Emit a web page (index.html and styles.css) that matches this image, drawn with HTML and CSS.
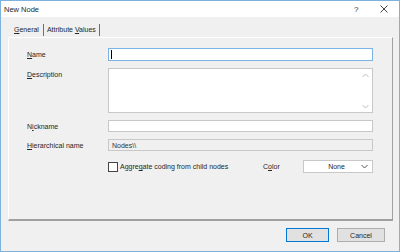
FILE: index.html
```html
<!DOCTYPE html>
<html lang="en">
<head>
  <meta charset="UTF-8">
  <title>New Node</title>
  <link rel="stylesheet" href="styles.css">
</head>
<body>
  <div class="window">
    <div class="titlebar">
      <span class="title">New Node</span>
      <span class="tb-help">?</span>
      <span class="tb-close">
        <svg width="8" height="8" viewBox="0 0 8 8"><path d="M0.5 0.5L7.5 7.5M7.5 0.5L0.5 7.5" stroke="#444" stroke-width="1"/></svg>
      </span>
    </div>

    <div class="tabs">
      <div class="tab active"><u>G</u>eneral</div>
      <div class="tab">Attribute <u>V</u>alues</div>
    </div>

    <div class="panel">
      <div class="form">
        <label class="lbl"><u>N</u>ame</label>
        <div class="box focused"><span class="caret"></span></div>

        <label class="lbl lbl-top"><u>D</u>escription</label>
        <div class="box memo">
          <div class="vscroll">
            <svg width="7" height="5" viewBox="0 0 7 5"><path d="M0.5 4L3.5 1L6.5 4" fill="none" stroke="#bdbdbd"/></svg>
            <svg width="7" height="5" viewBox="0 0 7 5"><path d="M0.5 1L3.5 4L6.5 1" fill="none" stroke="#bdbdbd"/></svg>
          </div>
        </div>

        <label class="lbl">N<u>i</u>ckname</label>
        <div class="box"></div>

        <label class="lbl"><u>H</u>ierarchical name</label>
        <div class="box disabled">Nodes\\</div>

        <span></span>
        <div class="options">
          <label class="check"><span class="checkbox"></span><span>Aggre<u>g</u>ate coding from child nodes</span></label>
          <span class="color-lbl">C<u>o</u>lor</span>
          <div class="select">
            <span>None</span>
            <svg width="7" height="5" viewBox="0 0 7 5"><path d="M0.5 1L3.5 4L6.5 1" fill="none" stroke="#555"/></svg>
          </div>
        </div>
      </div>
    </div>

    <div class="footer">
      <button class="btn default">OK</button>
      <button class="btn">Cancel</button>
    </div>
  </div>
</body>
</html>
```

FILE: styles.css
```css
:root {
  --frame: #7fb1dd;
  --face: #f0f0f0;
  --edge: #a0a0a0;
  --field: #c8c8c8;
  --text: #262626;
  --focus: #7ab3e6;
  --font: 'Liberation Sans', Arial, sans-serif;
}

* {
  box-sizing: border-box;
}

body {
  margin: 0;
  font-family: var(--font);
  font-size: 7px;
  color: var(--text);
}

.window {
  width: 400px;
  height: 252px;
  border: 1px solid var(--frame);
  background: var(--face);
  display: flex;
  flex-direction: column;
}

.titlebar {
  height: 16px;
  flex: none;
  background: #fff;
  display: flex;
  align-items: center;
  padding: 0 0 0 3px;
}

.title {
  font-size: 7.5px;
  flex: 1;
}

.tb-help {
  font-size: 8px;
  width: 26px;
  color: #333;
}

.tb-close {
  width: 19px;
  display: flex;
  align-items: center;
}

.tabs {
  display: flex;
  flex: none;
  padding: 7px 0 0 9px;
  height: 20px;
}

.tab {
  height: 12px;
  line-height: 12px;
  padding: 0 3px;
  border-right: 1px solid #6f6f6f;
}

.tab.active {
  padding: 0 4px 0 4px;
}

.tab + .tab {
  padding-left: 3px;
}

.panel {
  flex: none;
  margin: 0 6px 0 7px;
  height: 184px;
  border-top: 1px solid #fff;
  border-left: 1px solid #fff;
  border-right: 1px solid var(--edge);
  border-bottom: 2px solid var(--edge);
  padding: 10px 19px 0 18px;
}

.form {
  display: grid;
  grid-template-columns: 81px 265px;
  grid-template-rows: 13px 45px 12px 12px 13px;
  row-gap: 7px;
  align-items: center;
}

.lbl {
  align-self: center;
}

.lbl-top {
  align-self: start;
  padding-top: 3px;
}

.box {
  height: 100%;
  background: #fff;
  border: 1px solid var(--field);
  display: flex;
  align-items: center;
  padding: 0 3px;
}

.box.focused {
  border-color: var(--focus);
  padding-left: 2px;
}

.caret {
  width: 1px;
  height: 9px;
  background: #000;
}

.box.memo {
  justify-content: flex-end;
  align-items: stretch;
  padding: 0;
}

.vscroll {
  width: 13px;
  display: flex;
  flex-direction: column;
  justify-content: space-between;
  align-items: center;
  padding: 4px 0 3px;
}

.box.disabled {
  background: var(--face);
  color: #333;
}

.options {
  display: flex;
  align-items: center;
  margin-top: 4px;
}

.check {
  display: flex;
  align-items: center;
  gap: 2px;
  width: 155px;
}

.checkbox {
  width: 10px;
  height: 10px;
  border: 1px solid #444;
  background: #fff;
}

.color-lbl {
  width: 40px;
}

.select {
  width: 70px;
  height: 13px;
  background: #fff;
  border: 1px solid var(--field);
  display: flex;
  align-items: center;
  padding: 0 4px 0 0;
}

.select span {
  flex: 1;
  text-align: center;
  padding-left: 8px;
}

.footer {
  display: flex;
  justify-content: flex-end;
  gap: 8px;
  padding: 7px 14px 0 0;
}

.btn {
  width: 43px;
  height: 14px;
  font-family: var(--font);
  font-size: 7px;
  color: var(--text);
  background: #e1e1e1;
  border: 1px solid #adadad;
  padding: 0;
}

.btn.default {
  border-color: #0078d7;
}

.btn:last-child {
  width: 48px;
}
```
